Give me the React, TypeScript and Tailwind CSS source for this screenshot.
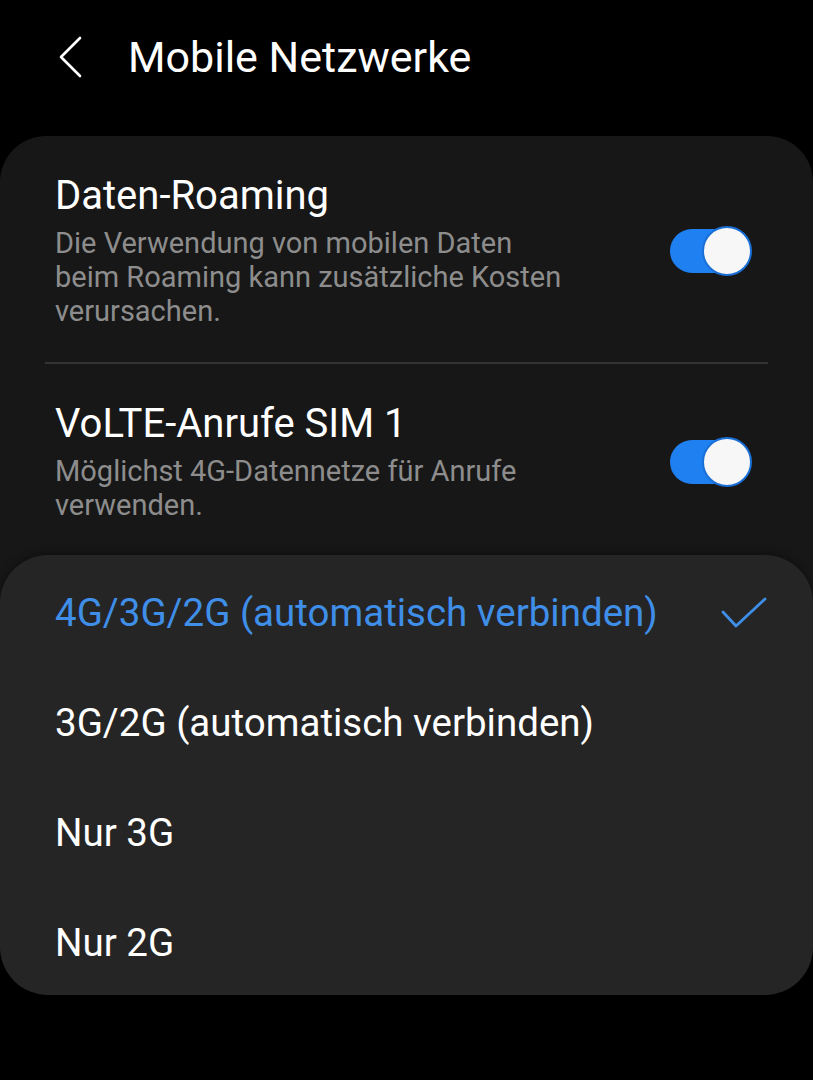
import React from 'react';

const font = { fontFamily: 'Roboto, "Noto Sans", sans-serif' };

const Toggle = () => (
	<div className="relative w-[82px] h-[50px] shrink-0">
		<div className="absolute left-0 top-[3px] w-[72px] h-[44px] rounded-full bg-[#1f80f2]" />
		<div className="absolute right-0 top-0 w-[50px] h-[50px] rounded-full bg-[#f7f7f7] border-[2px] border-[#1a6fd6]" />
	</div>
);

const options = [
	'4G/3G/2G (automatisch verbinden)',
	'3G/2G (automatisch verbinden)',
	'Nur 3G',
	'Nur 2G',
];

const App = () => {
	return (
		<div className="w-[813px] h-[1080px] bg-black text-white overflow-hidden relative" style={font}>
			{/* header */}
			<div className="h-[114px] flex items-center">
				<svg className="ml-[56px] w-[28px] h-[44px]" viewBox="0 0 28 44" fill="none">
					<polyline points="24,3 5,22 24,41" stroke="#ffffff" strokeWidth="2.6" strokeLinecap="round" strokeLinejoin="round" />
				</svg>
				<div className="ml-[44px] text-[43px] leading-normal">Mobile Netzwerke</div>
			</div>

			{/* settings card */}
			<div className="mt-[22px] bg-[#171717] rounded-[46px] pt-[37px] pb-[120px]">
				<div className="flex items-center pl-[55px] pr-[61px] pb-[34px]">
					<div className="flex-1">
						<div className="text-[40px] leading-[46px]">Daten-Roaming</div>
						<div className="mt-[7px] text-[29px] leading-[34px] text-[#8d8d8d]">
							Die Verwendung von mobilen Daten
							<br />
							beim Roaming kann zusätzliche Kosten
							<br />
							verursachen.
						</div>
					</div>
					<Toggle />
				</div>
				<div className="mx-[45px] h-[2px] bg-[#333333]" />
				<div className="flex items-center pl-[55px] pr-[61px] pt-[37px] pb-[34px]">
					<div className="flex-1">
						<div className="text-[40px] leading-[46px]">VoLTE-Anrufe SIM 1</div>
						<div className="mt-[7px] text-[29px] leading-[34px] text-[#8d8d8d]">
							Möglichst 4G-Datennetze für Anrufe
							<br />
							verwenden.
						</div>
					</div>
					<Toggle />
				</div>
			</div>

			{/* network mode menu */}
			<div className="absolute left-0 right-0 top-[555px] h-[440px] pt-[3px] bg-[#252525] rounded-[48px] shadow-[0_-2px_8px_rgba(0,0,0,0.35)]">
				{options.map((opt, i) => (
					<div key={opt} className="h-[110px] flex items-center justify-between pl-[55px] pr-[46px]">
						<span className={'text-[38.5px] leading-normal ' + (i === 0 ? 'text-[#3f8ee8]' : 'text-white')}>{opt}</span>
						{i === 0 && (
							<svg className="w-[46px] h-[32px]" viewBox="0 0 46 32" fill="none">
								<polyline points="2,15 15,29 44,2" stroke="#3f8ee8" strokeWidth="2.8" strokeLinecap="round" strokeLinejoin="round" />
							</svg>
						)}
					</div>
				))}
			</div>
		</div>
	);
};

export default App;
